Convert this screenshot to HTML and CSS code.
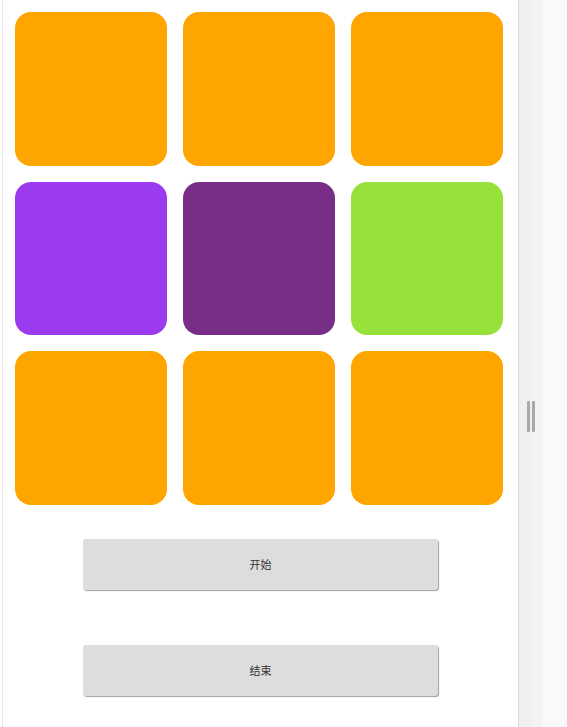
FILE: index.html
```html
<!DOCTYPE html>
<html lang="zh">
<head>
<meta charset="utf-8">
<link rel="stylesheet" href="styles.css">
</head>
<body>
<div class="app">
  <div class="main">
    <div class="grid">
      <div class="tile orange"></div>
      <div class="tile orange"></div>
      <div class="tile orange"></div>
      <div class="tile purple"></div>
      <div class="tile plum"></div>
      <div class="tile green"></div>
      <div class="tile orange"></div>
      <div class="tile orange"></div>
      <div class="tile orange"></div>
    </div>
    <div class="actions">
      <button class="btn">开始</button>
      <button class="btn">结束</button>
    </div>
  </div>
  <div class="side">
    <div class="side-a">
      <div class="handle"><span class="bar"></span><span class="bar"></span></div>
    </div>
    <div class="side-b"></div>
    <div class="side-c"></div>
  </div>
</div>
</body>
</html>
```
FILE: styles.css
```css
html, body {
  margin: 0;
  padding: 0;
  background: #fff;
}
.app {
  display: flex;
  height: 727px;
  overflow: hidden;
}
.main {
  width: 516px;
  margin-left: 2px;
  border-left: 1px solid #e4e4ea;
  padding-top: 12px;
  box-sizing: content-box;
}
.grid {
  margin-left: 12px;
  display: grid;
  grid-template-columns: repeat(3, 152px);
  grid-auto-rows: 153.5px;
  gap: 16px;
}
.tile {
  border-radius: 16px;
}
.orange { background: #ffa500; }
.purple { background: #9a3bef; }
.plum { background: #782e86; }
.green { background: #97e23a; }
.actions {
  display: flex;
  flex-direction: column;
  align-items: center;
  margin-top: 34px;
  gap: 55px;
}
.btn {
  width: 355px;
  height: 51px;
  border: none;
  border-radius: 3px;
  background: #dddddd;
  box-shadow: 1px 1px 1px #a0a0a0;
  font-family: "Noto Sans CJK SC", "Noto Sans", sans-serif;
  font-size: 11px;
  color: #333;
  padding: 0;
  margin: 0;
}
.side {
  width: 48px;
  display: flex;
  border-left: 1px solid #dcdcdc;
}
.side-a {
  width: 13px;
  flex-shrink: 0;
  background: #efefef;
  display: flex;
  align-items: center;
  padding-left: 8px;
  box-sizing: border-box;
  overflow: visible;
  position: relative;
  z-index: 1;
}
.side-b {
  width: 10px;
  flex-shrink: 0;
  background: #f3f3f3;
}
.side-c {
  flex: 1;
  background: #f9f9f9;
}
.handle {
  display: flex;
  gap: 2px;
  margin-top: 106px;
  flex-shrink: 0;
}
.bar {
  width: 3px;
  height: 31px;
  flex-shrink: 0;
  background: #a9a9a9;
  border-radius: 1px;
}
```
